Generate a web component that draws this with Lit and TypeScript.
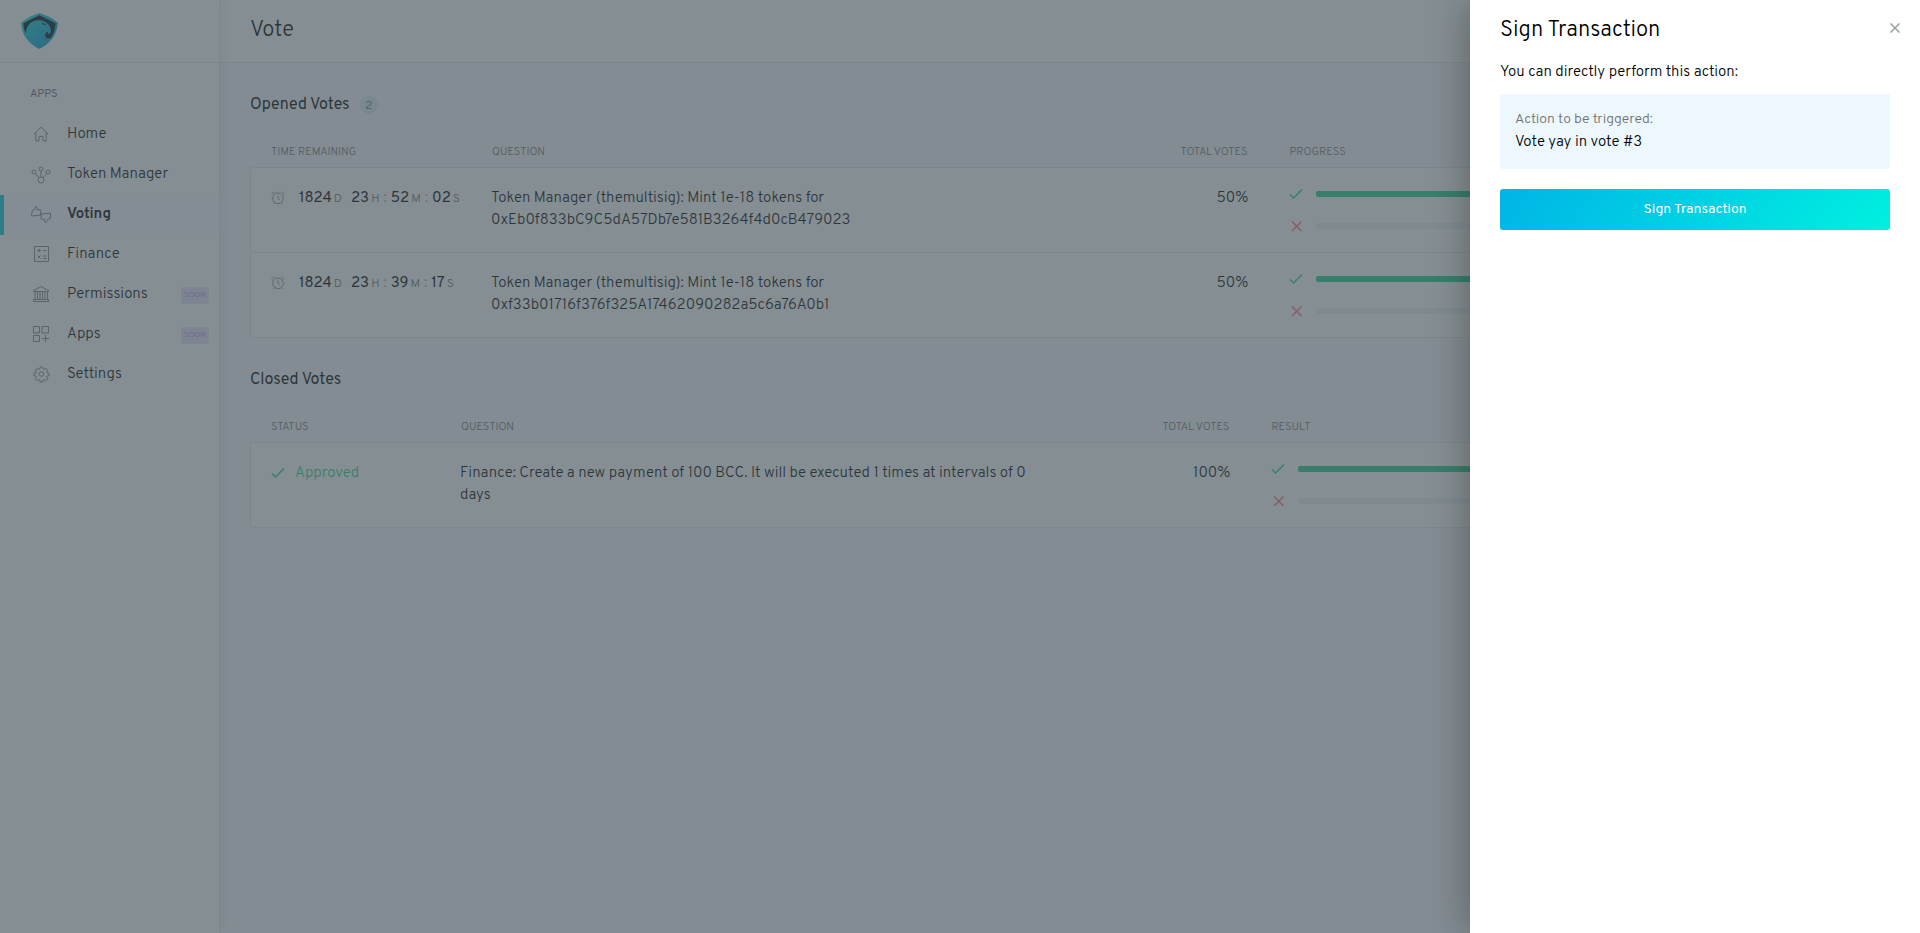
import { LitElement, html, css, svg, nothing } from "lit";
import { customElement, property } from "lit/decorators.js";

const checkIcon = html`<svg class="vote-icon yay" viewBox="0 0 14 14" width="14" height="14" aria-hidden="true"><path d="M1 7.4 4.6 11 13 2.4" /></svg>`;
const crossIcon = html`<svg class="vote-icon nay" viewBox="0 0 14 14" width="14" height="14" aria-hidden="true"><path d="M3 2.5 12.500 12M12.500 2.500 3 12" /></svg>`;
const clockIcon = html`<svg class="clock" viewBox="0 0 14 14" width="14" height="14" aria-hidden="true">
  <circle cx="7" cy="7.3" r="5.300" /><path d="M7 4.5v3l1.8 1.4M3.4 11.500 2.4 13M10.6 11.500l1 1.500M.9 3.5C1.1 2.1 2.3 1 3.6 1M13.1 3.5C12.9 2.1 11.7 1 10.4 1" /></svg>`;

const menuIcons: Record<string, unknown> = {
  home: svg`<path d="M4 11 11 4.2 18 11M5.8 9.6V18H9v-4.6h4V18h3.2V9.6" />`,
  token: svg`<circle cx="11" cy="17" r="3" /><circle cx="4" cy="9" r="2" /><circle cx="11" cy="6" r="2" /><circle cx="18" cy="9" r="2" /><path d="M11 8v6M5.4 10.5 9 14.6M16.6 10.5 13 14.6" />`,
  voting: svg`<path d="M1.500 11.500 2.500 7.500 4.200 7 6 3.500c1.200.2 1.400 1.200 1 3.200l4 .3-.6 5.200-8.900.8zM20.500 10.500v5l-2.300.5-2.400 3.500c-1.200-.2-1.400-1.200-1-3l-3.800-.5.300-5 9.200-.8z" />`,
  finance: svg`<path d="M4.500 3.500h14v15h-14zM7 7.500h4M9 5.500v4M13 7.500h3.500M7.500 12.500l3 3M10.500 12.500l-3 3M13 13h3.500M13 15.500h3.500" />`,
  permissions: svg`<path d="M3.500 7.500 11 3.500l7.500 4v1h-15zM5 8.500v8M7.500 8.500v8M10 8.500v8M12.500 8.500v8M15 8.500v8M17.500 8.500v8M3.500 16.500h15v2h-15z" />`,
  apps: svg`<path d="M3.500 3.500h6v6.500h-6zM12 3.500h6.500V10H12zM3.500 12.500h6v6h-6zM15.500 12v7M12 15.500h7" />`,
  settings: svg`<circle cx="11.500" cy="11" r="2.300" /><path d="M10.200 4h2.600l.3 1.900 1.200.5 1.600-1.100 1.800 1.800-1.100 1.600.5 1.200 1.900.3v2.600l-1.900.3-.5 1.200 1.100 1.600-1.800 1.800-1.600-1.100-1.200.5-.3 1.900h-2.600l-.3-1.900-1.200-.5-1.600 1.100-1.800-1.800 1.100-1.600-.5-1.200L4 12.800v-2.600l1.900-.3.5-1.200-1.100-1.600 1.800-1.800 1.600 1.100 1.200-.5z" />`,
};

@customElement("nav-menu")
class NavMenu extends LitElement {
  private items = [
    { id: "home", label: "Home" },
    { id: "token", label: "Token Manager" },
    { id: "voting", label: "Voting", active: true },
    { id: "finance", label: "Finance" },
    { id: "permissions", label: "Permissions", soon: true },
    { id: "apps", label: "Apps", soon: true },
    { id: "settings", label: "Settings" },
  ];

  static styles = css`
    :host { display: block; background: #fff; border-right: 1px solid #e8e8e8; box-shadow: 1px 0 15px rgba(0, 0, 0, 0.08); }
    .brand { display: flex; align-items: center; height: 62px; padding-left: 20px; border-bottom: 1px solid #e8e8e8; }
    h2 { margin: 21px 0 11px 30px; font-size: 11px; font-weight: 400; line-height: 20px; color: #707070; }
    ul { list-style: none; margin: 0; padding: 0; }
    a { display: flex; align-items: center; height: 40px; box-sizing: border-box; padding: 0 10px 0 30px; color: #000; text-decoration: none; }
    a.active { background: #f9fcfe; box-shadow: inset 4px 0 0 #00cbe6; font-weight: 600; }
    .glyph { flex: none; margin: 0 15px 2px 0; fill: none; stroke: #7d898f; stroke-width: 1; }
    .soon { margin: 0 0 0 auto; padding: 0 3px; border-radius: 3px; font-size: 8px; font-weight: 400; line-height: 17px; background: #ece4fd; color: #b994f5; }
  `;

  render() {
    return html`
      <div class="brand">
        <svg viewBox="0 0 38 38" width="38" height="38" role="img" aria-label="Aragon">
          <defs>
            <linearGradient id="eagle" x1="0" y1="0" x2="1" y2="1"><stop offset="0" stop-color="#16e0d5" /><stop offset="1" stop-color="#0091d8" /></linearGradient>
          </defs>
          <path fill="url(#eagle)" d="M19.300 1C13 3 7 6 1 10.500c.5 12 7 21 18.300 26.500 11-5.500 18-14.500 18.500-26.500C32 6 26 3 19.300 1z" />
          <path fill="#0b161f" d="M3.300 11.200 19.300 3.300 35.500 11.200C35.200 15.500 34.300 19 32.700 22.500 31.500 25.500 30 27 28 26.500 25.600 26.200 24.800 24 25.300 22 25.600 20.400 27 20 28 20.400L28.200 22C29.800 22.200 31.500 20.500 31 18 30 13 26 9 20 8.300 12 7.500 6.500 12.500 5.700 21.500 4.200 18 3.500 15 3.300 11.200z" />
          <path fill="#0b161f" d="M22 11c2 0 3.200.7 4 2-1.700.3-3-.4-4-2z" />
        </svg>
      </div>
      <h2>APPS</h2>
      <ul>
        ${this.items.map((i) => html`<li>
          <a href="#${i.id}" class=${i.active ? "active" : ""} aria-current=${i.active ? "page" : nothing}>
            <svg class="glyph" viewBox="0 0 22 22" width="22" height="22" aria-hidden="true">${menuIcons[i.id]}</svg>
            ${i.label}${i.soon ? html`<span class="soon">SOON</span>` : nothing}
          </a></li>`)}
      </ul>`;
  }
}

interface Vote { time?: string[]; question: unknown; total: string; yay: number; nay: number }

@customElement("vote-table")
class VoteTable extends LitElement {
  @property({ attribute: false }) votes: Vote[] = [];
  @property({ type: Boolean }) closed = false;

  static styles = css`
    :host { display: block; }
    table { width: 100%; table-layout: fixed; border-collapse: separate; border-spacing: 0; }
    .c-time { width: 221px; }
    .c-status { width: 190px; }
    .c-wide { width: 37.9%; }
    .c-result { width: 39%; }
    th { padding: 0 21px; height: 25px; font-size: 11px; font-weight: 300; line-height: 20px; vertical-align: top; text-align: left; color: #707070; }
    th.num, td.num { text-align: right; }
    td { box-sizing: border-box; height: 85px; padding: 19px 20px 0; vertical-align: top; line-height: 22px; background: #fff; border-bottom: 1px solid #e8e8e8; }
    td:first-child { padding-right: 0; border-left: 1px solid #e8e8e8; }
    td:last-child { border-right: 1px solid #e8e8e8; }
    tbody tr:first-child td { height: 86px; border-top: 1px solid #e8e8e8; }
    tbody tr:first-child td:first-child { border-top-left-radius: 3px; }
    tbody tr:first-child td:last-child { border-top-right-radius: 3px; }
    tbody tr:last-child td:first-child { border-bottom-left-radius: 3px; }
    tbody tr:last-child td:last-child { border-bottom-right-radius: 3px; }
    .question, .total, .status { padding-top: 1px; }
    .question { max-width: 600px; }
    .time, .status { display: flex; align-items: center; }
    .time { font-weight: 400; white-space: nowrap; }
    .clock { flex: none; margin: 0 14px 2px 0; fill: none; stroke: #8a9497; }
    .unit { margin-left: 2px; padding-top: 1px; font-size: 12px; font-weight: 300; color: #707070; }
    .days { margin-right: 9px; }
    .sep { margin: 0 4px; color: #98a0a2; font-weight: 300; }
    .status { gap: 10px; color: #21d48e; }
    .status .vote-icon { margin-bottom: 2px; }
    .vote-icon { flex: none; fill: none; stroke-width: 1.400; }
    .yay { stroke: #21d48e; }
    .nay { stroke: #fb7777; }
    .bar { display: flex; align-items: center; gap: 13px; height: 14px; margin: 0 0 18px 1px; }
    .track { flex: 1; height: 6px; border-radius: 2px; background: #edf3f6; overflow: hidden; }
    .fill { height: 100%; background: #21d48e; }
    .fill.against { background: #fb7777; }
  `;

  private bar(icon: unknown, pct: number, cls: string) {
    return html`<div class="bar">${icon}<div class="track"><div class="fill ${cls}" style="width:${pct}%"></div></div></div>`;
  }

  render() {
    return html`<table>
      <colgroup><col class=${this.closed ? "c-status" : "c-time"} /><col class=${this.closed ? "c-result" : "c-wide"} /><col /><col class=${this.closed ? "c-result" : "c-wide"} /></colgroup>
      <thead><tr>
        <th scope="col">${this.closed ? "STATUS" : "TIME REMAINING"}</th>
        <th scope="col">QUESTION</th><th scope="col" class="num">TOTAL VOTES</th>
        <th scope="col">${this.closed ? "RESULT" : "PROGRESS"}</th>
      </tr></thead>
      <tbody>${this.votes.map((v) => html`<tr>
        <td>${v.time
          ? html`<div class="time">${clockIcon}${v.time[0]}<span class="unit days">D</span>${v.time[1]}<span class="unit">H</span><span class="sep">:</span>${v.time[2]}<span class="unit">M</span><span class="sep">:</span>${v.time[3]}<span class="unit">S</span></div>`
          : html`<div class="status">${checkIcon}Approved</div>`}</td>
        <td><div class="question">${v.question}</div></td>
        <td class="num"><div class="total">${v.total}</div></td>
        <td>${this.bar(checkIcon, v.yay, "")}${this.bar(crossIcon, v.nay, "against")}</td>
      </tr>`)}</tbody>
    </table>`;
  }
}

@customElement("sign-panel")
class SignPanel extends LitElement {
  static styles = css`
    :host { display: block; box-sizing: border-box; padding: 13px 30px; background: #fff; box-shadow: -2px 0 36px rgba(0, 0, 0, 0.3); }
    header { display: flex; justify-content: space-between; align-items: flex-start; margin-right: -15px; }
    h1 { margin: 3px 0 0; font-size: 22px; font-weight: 300; line-height: 30px; }
    .close { display: flex; margin-top: 5px; padding: 5px; border: 0; background: none; }
    .close svg { stroke: #98a0a2; stroke-width: 1.500; }
    p { margin: 0; line-height: 22px; }
    .intro { margin-top: 16px; }
    .info { margin: 10px 0 20px; padding: 15px; border-radius: 3px; background: #ecf7fe; }
    .label { margin-bottom: 1px; font-size: 14px; color: #707070; }
    .sign { display: block; width: 100%; height: 41px; padding: 0; border: 0; border-radius: 3px; font-family: inherit; font-size: 14px; font-weight: 400; color: #fff; background: linear-gradient(130deg, #00b4e6, #00f0e0); }
  `;

  render() {
    return html`
      <header><h1>Sign Transaction</h1>
        <button class="close" type="button" aria-label="Close"><svg viewBox="0 0 10 10" width="10" height="10"><path d="M.5.5l9 9M9.500.5l-9 9" /></svg></button>
      </header>
      <p class="intro">You can directly perform this action:</p>
      <div class="info"><p class="label">Action to be triggered:</p><p>Vote yay in vote #3</p></div>
      <button class="sign" type="button">Sign Transaction</button>`;
  }
}

@customElement("app-root")
class AppRoot extends LitElement {
  private opened: Vote[] = [
    { time: ["1824", "23", "52", "02"], question: html`Token Manager (themultisig): Mint 1e-18 tokens for<br />0xEb0f833bC9C5dA57Db7e581B3264f4d0cB479023`, total: "50%", yay: 100, nay: 0 },
    { time: ["1824", "23", "39", "17"], question: html`Token Manager (themultisig): Mint 1e-18 tokens for<br />0xf33b01716f376f325A17462090282a5c6a76A0b1`, total: "50%", yay: 100, nay: 0 },
  ];
  private closedVotes: Vote[] = [
    { question: "Finance: Create a new payment of 100 BCC. It will be executed 1 times at intervals of 0 days", total: "100%", yay: 100, nay: 0 },
  ];

  static styles = css`
    :host { display: grid; grid-template-columns: 220px minmax(0, 1fr); min-height: 100vh; background: #f8fafc; color: #000; font-family: Overpass, Roboto, sans-serif; font-size: 15px; font-weight: 300; line-height: 22px; }
    nav-menu { z-index: 1; }
    .title { padding: 16px 30px; background: #fff; border-bottom: 1px solid #e8e8e8; }
    h1 { margin: 0; font-size: 22px; font-weight: 300; line-height: 30px; }
    section { padding: 30px 30px 0; }
    h2 { display: flex; align-items: center; margin: 0 0 25px; font-size: 16px; font-weight: 400; line-height: 24px; }
    .count { margin-left: 10px; width: 18px; height: 18px; border-radius: 50%; font-size: 12px; line-height: 20px; text-align: center; background: #dceaef; color: #6d8088; }
    .overlay { position: absolute; inset: 0; z-index: 2; background: rgba(68, 81, 89, 0.65); }
    sign-panel { position: absolute; z-index: 3; top: 0; right: 0; bottom: 0; width: 450px; }
  `;

  render() {
    return html`
      <nav-menu></nav-menu>
      <main>
        <div class="title"><h1>Vote</h1></div>
        <section><h2>Opened Votes <span class="count">2</span></h2><vote-table .votes=${this.opened}></vote-table></section>
        <section><h2>Closed Votes</h2><vote-table closed .votes=${this.closedVotes}></vote-table></section>
      </main>
      <div class="overlay"></div>
      <sign-panel></sign-panel>`;
  }
}
